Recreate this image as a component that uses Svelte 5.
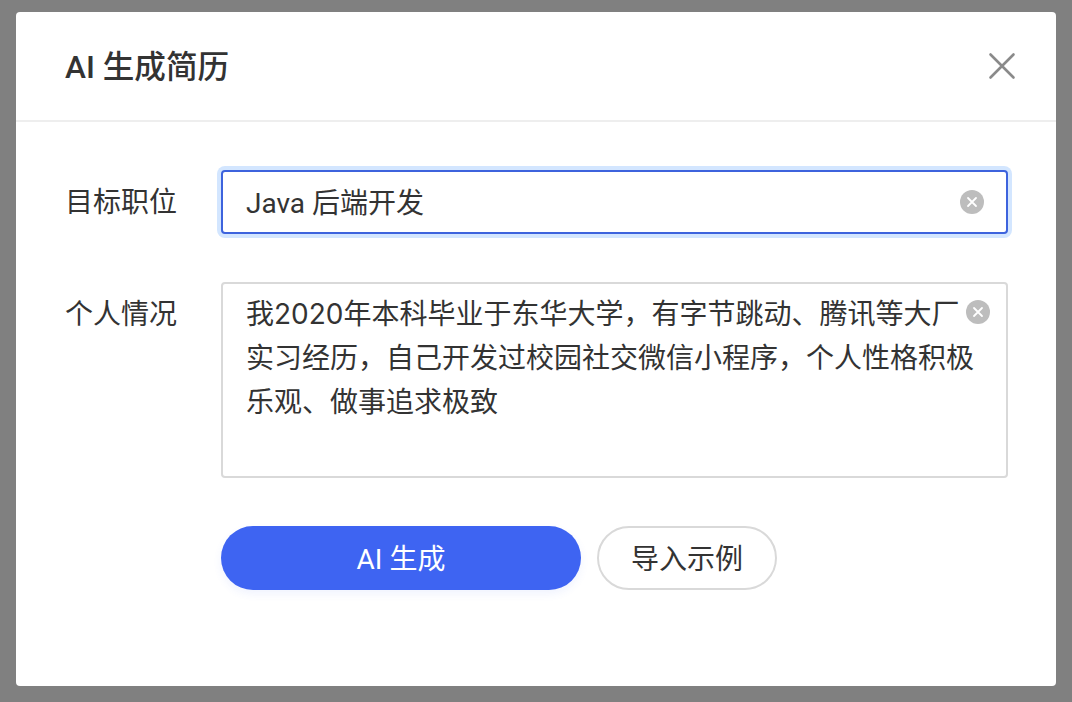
<script>
  const jobTitle = 'Java 后端开发';
  const comma = '\uFF0C';
  const summary = `我2020年本科毕业于东华大学${comma}有字节跳动、腾讯等大厂实习经历${comma}自己开发过校园社交微信小程序${comma}个人性格积极乐观、做事追求极致`;
</script>

<div class="overlay">
  <section class="modal">
    <header class="head">
      <h1>AI 生成简历</h1>
      <button class="close" aria-label="关闭">
        <svg width="28" height="28" viewBox="0 0 28 28"><path d="M2.5 2.5 25.5 25.5M25.5 2.5 2.5 25.5" stroke="#8a8a8a" stroke-width="2.6" stroke-linecap="round" fill="none"/></svg>
      </button>
    </header>
    <div class="body">
      <div class="row first">
        <div class="label">目标职位</div>
        <div class="field input">
          <span class="value">{jobTitle}</span>
          <svg class="clear" width="24" height="24" viewBox="0 0 24 24"><circle cx="12" cy="12" r="12" fill="#bdbdbd"/><path d="M8 8 16 16M16 8 8 16" stroke="#fff" stroke-width="1.8" stroke-linecap="round"/></svg>
        </div>
      </div>
      <div class="row second">
        <div class="label">个人情况</div>
        <div class="field area">
          <span class="value">{summary}</span>
          <svg class="clear over" width="24" height="24" viewBox="0 0 24 24"><circle cx="12" cy="12" r="12" fill="#bdbdbd"/><path d="M8 8 16 16M16 8 8 16" stroke="#fff" stroke-width="1.8" stroke-linecap="round"/></svg>
        </div>
      </div>
      <div class="actions">
        <button class="btn primary">AI 生成</button>
        <button class="btn ghost">导入示例</button>
      </div>
    </div>
  </section>
</div>

<style>
  :global(body) {
    margin: 0;
    background: #808080;
  }
  .overlay {
    box-sizing: border-box;
    height: 702px;
    padding: 12px 16px 16px;
    background: #808080;
    font-family: Roboto, "Noto Sans CJK SC", sans-serif;
    color: #333;
    overflow: hidden;
  }
  .modal {
    height: 674px;
    background: #fff;
    border-radius: 4px;
  }
  .head {
    box-sizing: border-box;
    height: 110px;
    padding: 3px 40px 0 49px;
    display: flex;
    align-items: center;
    justify-content: space-between;
    border-bottom: 2px solid #eeeeee;
  }
  h1 {
    margin: 0;
    font-size: 31.6px;
    font-weight: 500;
    line-height: 44px;
    color: #333;
  }
  .close {
    padding: 0;
    margin-top: -3px;
    border: 0;
    background: none;
    display: flex;
  }
  .body {
    padding: 48px 48px 0 49px;
  }
  .row {
    display: flex;
    align-items: flex-start;
  }
  .second {
    margin-top: 48px;
  }
  .label {
    width: 155.5px;
    flex: none;
    font-size: 28px;
    line-height: 63px;
    padding-top: 1px;
    color: #333;
  }
  .field {
    box-sizing: border-box;
    width: 787px;
    border-radius: 4px;
    background: #fff;
    font-size: 28px;
    color: #333;
    display: flex;
  }
  .input {
    height: 64px;
    padding: 0 22px 0 23px;
    margin-left: 0.5px;
    align-items: center;
    justify-content: space-between;
    border: 2px solid #3d63dd;
    box-shadow: 0 0 0 4px #d3e6ff;
  }
  .input .value {
    padding-bottom: 2px;
  }
  .area {
    position: relative;
    height: 196px;
    padding: 8px 26px 0 23px;
    margin-left: 0.5px;
    border: 2px solid #d9d9d9;
    line-height: 44px;
    font-family: Inter, "Noto Sans CJK SC", sans-serif;
  }
  .value {
    display: block;
  }
  .clear {
    flex: none;
  }
  .over {
    position: absolute;
    top: 16px;
    right: 16px;
  }
  .actions {
    display: flex;
    gap: 16px;
    margin: 48px 0 0 156px;
  }
  .btn {
    height: 64px;
    border-radius: 32px;
    font-family: inherit;
    font-size: 28px;
    padding: 0 0 2px;
  }
  .primary {
    width: 360px;
    border: 0;
    background: #3e64f2;
    color: #fff;
    box-shadow: 0 4px 8px rgba(62, 100, 245, 0.08);
  }
  .ghost {
    width: 180px;
    border: 2px solid #d9d9d9;
    background: #fff;
    color: #333;
  }
</style>
